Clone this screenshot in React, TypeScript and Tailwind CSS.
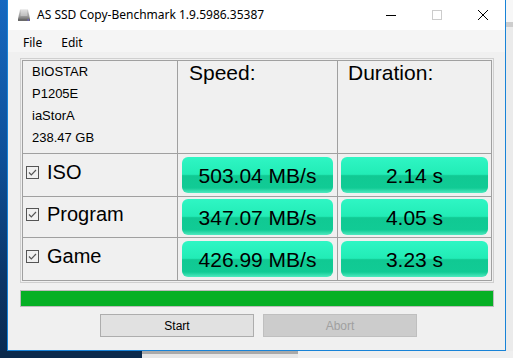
export default function App() {
  const rows = [
    { name: "ISO", speed: "503.04 MB/s", duration: "2.14 s", h: "h-[42px]" },
    { name: "Program", speed: "347.07 MB/s", duration: "4.05 s", h: "h-[40px]" },
    { name: "Game", speed: "426.99 MB/s", duration: "3.23 s", h: "h-[42px]" },
  ];

  const info = ["BIOSTAR", "P1205E", "iaStorA", "238.47 GB"];

  const pill =
    "flex h-[36px] w-full items-center justify-center rounded-[6px] bg-[linear-gradient(to_bottom,#2ff6c4_0%,#22ecb6_48%,#10c993_52%,#11cb95_86%,#4feac0_100%)] text-[21px] leading-none text-black";

  return (
    <div className="flex h-[358px] w-[513px] flex-col overflow-hidden bg-[#f0f0f0] font-['Liberation_Sans',Arial,sans-serif]">
      <div className="flex h-[351px]">
        <div className="w-[7px] bg-[linear-gradient(to_bottom,#1668c0_0%,#0d4f98_45%,#0b3566_80%,#0a2b52_100%)]" />

        <div className="flex w-[499px] flex-col border-x border-b border-[#1883d7] bg-[#f0f0f0]">
          {/* title bar */}
          <div className="flex h-[30px] items-center bg-white">
            <svg width="14" height="14" viewBox="0 0 14 14" className="ml-[9px]">
              <defs>
                <linearGradient id="drv" x1="0" y1="0" x2="0" y2="1">
                  <stop offset="0" stopColor="#d8d8d8" />
                  <stop offset="0.6" stopColor="#9a9a9a" />
                  <stop offset="1" stopColor="#5c5c5c" />
                </linearGradient>
              </defs>
              <path d="M3 1.5h8l2 9.5v2H1v-2z" fill="url(#drv)" />
              <path d="M4 3h6M4 5h6M3.6 7h6.8" stroke="#eeeeee" strokeWidth="0.8" />
              <rect x="1" y="11" width="12" height="2" fill="#6a6a6a" />
              <rect x="10.5" y="11.5" width="1.5" height="1" fill="#6b5cff" />
            </svg>
            <span className="ml-[6px] font-['Noto_Sans',sans-serif] text-[12px] text-black">
              AS SSD Copy-Benchmark 1.9.5986.35387
            </span>
            <div className="ml-auto flex h-full">
              <div className="flex w-[46px] items-center justify-center">
                <svg width="10" height="10" viewBox="0 0 10 10">
                  <path d="M0 5.5h10" stroke="#000" strokeWidth="1" />
                </svg>
              </div>
              <div className="flex w-[46px] items-center justify-center">
                <svg width="10" height="10" viewBox="0 0 10 10">
                  <rect x="0.5" y="0.5" width="9" height="9" fill="none" stroke="#cccccc" strokeWidth="1" />
                </svg>
              </div>
              <div className="flex w-[45px] items-center justify-center">
                <svg width="10" height="10" viewBox="0 0 10 10">
                  <path d="M0 0l10 10M10 0L0 10" stroke="#000" strokeWidth="1" />
                </svg>
              </div>
            </div>
          </div>

          {/* menu bar */}
          <div className="flex h-[22px] items-center bg-[#f5f5f5] pl-[8px] pt-[3px] font-['Noto_Sans',sans-serif] text-[12px] text-black">
            <span className="px-[7px]">File</span>
            <span className="px-[12px]">Edit</span>
          </div>

          {/* main */}
          <div className="flex flex-1 flex-col pt-[6px]">
            <div className="ml-[12px] w-[474px] border border-[#cfcfcf] p-px">
              <div className="grid grid-cols-[154px_159px_153px] gap-px bg-[#a0a0a0] p-px">
                <div className="h-[92px] bg-[#f0f0f0] pl-[9px] text-[13px] leading-[22px] text-black">
                  {info.map((line) => (
                    <div key={line}>{line}</div>
                  ))}
                </div>
                <div className="h-[92px] bg-[#f0f0f0] pl-[11px] text-[21px] leading-[24px] text-black">Speed:</div>
                <div className="h-[92px] bg-[#f0f0f0] pl-[10px] text-[21px] leading-[24px] text-black">Duration:</div>

                {rows.map((row) => (
                  <div key={row.name} className="contents">
                    <div className={`${row.h} flex items-center bg-[#f0f0f0] pb-[6px] pl-[3px]`}>
                      <svg width="13" height="13" viewBox="0 0 13 13">
                        <rect x="0.5" y="0.5" width="12" height="12" fill="none" stroke="#555555" />
                        <path d="M3 6.5l2.3 2.3L10 4" fill="none" stroke="#555555" strokeWidth="1.2" />
                      </svg>
                      <span className="ml-[8px] text-[20px] leading-none text-black">{row.name}</span>
                    </div>
                    <div className={`${row.h} flex items-center bg-[#f0f0f0] px-[4px]`}>
                      <div className={pill}>{row.speed}</div>
                    </div>
                    <div className={`${row.h} flex items-center bg-[#f0f0f0] px-[3px]`}>
                      <div className={pill}>{row.duration}</div>
                    </div>
                  </div>
                ))}
              </div>
            </div>

            <div className="ml-[12px] mt-[7px] h-[17px] w-[474px] border border-[#bcbcbc] bg-[#06b025]" />

            <div className="ml-[92px] mt-[7px] flex gap-[9px] text-[12px]">
              <button className="h-[23px] w-[154px] border border-[#adadad] bg-[#e1e1e1] text-black">Start</button>
              <button className="h-[23px] w-[154px] border border-[#bfbfbf] bg-[#cccccc] text-[#a0a0a0]">Abort</button>
            </div>
          </div>
        </div>

        <div className="flex w-[7px] flex-col">
          <div className="h-[22px] bg-[#f7f7f7]" />
          <div className="h-[5px] bg-[#cdcdcd]" />
          <div className="flex-1 bg-[#ebebeb]" />
        </div>
      </div>

      <div className="flex h-[7px]">
        <div className="w-[142px] bg-[#0b2a4c]" />
        <div className="w-[156px] border-t-[3px] border-[#a9a9a9] bg-[#e6e6e6]" />
        <div className="flex-1 bg-[#efefef]" />
      </div>
    </div>
  );
}
